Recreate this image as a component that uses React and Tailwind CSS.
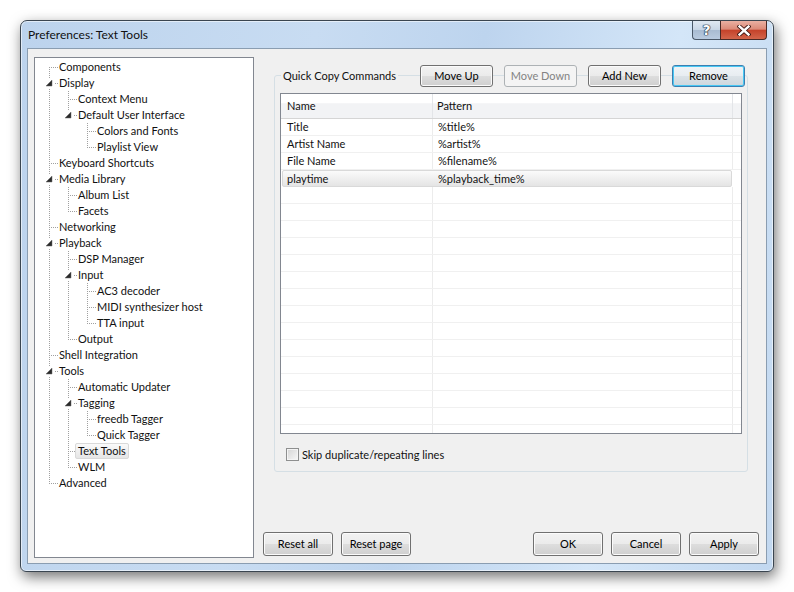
import React from 'react';

// Arborescence des pages de préférences
const tree = [
  { t: 'Components' },
  { t: 'Display', c: [
    { t: 'Context Menu' },
    { t: 'Default User Interface', c: [{ t: 'Colors and Fonts' }, { t: 'Playlist View' }] },
  ] },
  { t: 'Keyboard Shortcuts' },
  { t: 'Media Library', c: [{ t: 'Album List' }, { t: 'Facets' }] },
  { t: 'Networking' },
  { t: 'Playback', c: [
    { t: 'DSP Manager' },
    { t: 'Input', c: [{ t: 'AC3 decoder' }, { t: 'MIDI synthesizer host' }, { t: 'TTA input' }] },
    { t: 'Output' },
  ] },
  { t: 'Shell Integration' },
  { t: 'Tools', c: [
    { t: 'Automatic Updater' },
    { t: 'Tagging', c: [{ t: 'freedb Tagger' }, { t: 'Quick Tagger' }] },
    { t: 'Text Tools', sel: true },
    { t: 'WLM' },
  ] },
  { t: 'Advanced' },
];

const flatten = (nodes, depth = 0, cont = [], out = []) => {
  nodes.forEach((n, i) => {
    const last = i === nodes.length - 1;
    out.push({ ...n, depth, last, cont, first: depth === 0 && i === 0 });
    if (n.c) flatten(n.c, depth + 1, [...cont, !last], out);
  });
  return out;
};

const rows = flatten(tree);

const commands = [
  { name: 'Title', pattern: '%title%' },
  { name: 'Artist Name', pattern: '%artist%' },
  { name: 'File Name', pattern: '%filename%' },
  { name: 'playtime', pattern: '%playback_time%', sel: true },
];

const DOT = '#a0a0a0';

const Connector = ({ row }) => {
  const { depth, last, cont, first, c } = row;
  const w = 24 + 19 * depth;
  const x = 14 + 19 * depth + 0.5;
  return (
    <svg width={w} height="16" className="shrink-0" shapeRendering="crispEdges">
      {cont.map((on, k) =>
        on ? <line key={k} x1={14 + 19 * k + 0.5} y1="0" x2={14 + 19 * k + 0.5} y2="16" stroke={DOT} strokeDasharray="1 1" /> : null
      )}
      <line x1={x} y1={first ? 8 : 0} x2={x} y2={last ? 9 : 16} stroke={DOT} strokeDasharray="1 1" />
      <line x1={x + 1} y1="8.5" x2={x + 8} y2="8.5" stroke={DOT} strokeDasharray="1 1" />
      {c && (
        <>
          <rect x={10 + 19 * depth} y="3" width="10" height="10" fill="white" />
          <polygon
            points={`${17 + 19 * depth},5 ${17 + 19 * depth},11 ${11 + 19 * depth},11`}
            fill="#2b2b2b"
            stroke="#6b6b6b"
            strokeWidth="0.5"
            shapeRendering="auto"
          />
        </>
      )}
    </svg>
  );
};

const Button = ({ children, className = '', focused, disabled }) => {
  let look = 'border-[#707070] text-black bg-[linear-gradient(to_bottom,#f2f2f2_0%,#ebebeb_48%,#dddddd_52%,#cfcfcf_100%)] shadow-[inset_0_0_0_1px_#fbfbfb]';
  if (focused) look = 'border-[#3c7fb1] text-black bg-[linear-gradient(to_bottom,#f0f4f7_0%,#e8edf1_48%,#dbe2e7_52%,#ced7dd_100%)] shadow-[inset_0_0_0_1px_#48c8f4]';
  if (disabled) look = 'border-[#adb2b5] text-[#838383] bg-[#f4f4f4]';
  return (
    <div className={`flex items-center justify-center border rounded-[3px] ${look} ${className}`}>
      {children}
    </div>
  );
};

export default function App() {
  return (
    <div className="w-[794px] h-[592px] bg-white pt-[20px] pl-[20px] font-['Lato',sans-serif] text-[11px] text-[#111]">
      {/* fenêtre */}
      <div className="w-[754px] h-[552px] rounded-t-[7px] rounded-b-[6px] border border-[#3a4550] bg-[linear-gradient(100deg,#bcd3ed_0%,#c8dcf2_35%,#bdd4ee_55%,#d4e6f8_78%,#c2d8f0_100%)] shadow-[2px_5px_14px_rgba(0,0,0,0.55),inset_0_0_0_1px_rgba(255,255,255,0.55)] flex flex-col">
        {/* barre de titre */}
        <div className="h-[27px] flex items-start justify-between pl-[7px] pr-[6px]">
          <span className="leading-[27px] text-[12px]">Preferences: Text Tools</span>
          <div className="flex">
            <div className="w-[28px] h-[19px] border border-t-0 border-r-0 border-[#4a5868] rounded-bl-[4px] bg-[linear-gradient(to_bottom,#dfe8f2_0%,#c8d6e6_48%,#a9bcd2_52%,#b9cbe0_100%)] flex items-center justify-center">
              <span className="text-white font-black text-[14px] leading-none font-['DejaVu_Sans',sans-serif] [text-shadow:0_0_1px_#1b2a3d,0_0_1px_#1b2a3d,0_0_1px_#1b2a3d,0_0_1px_#1b2a3d]">?</span>
            </div>
            <div className="w-[47px] h-[19px] border border-t-0 border-[#4a2a26] rounded-br-[4px] bg-[linear-gradient(to_bottom,#eab0a2_0%,#dc8a78_45%,#c5432b_52%,#d3654b_100%)] flex items-center justify-center">
              <svg width="14" height="11" viewBox="0 0 14 11">
                <path d="M2.5 1.5 L11.5 9.5 M11.5 1.5 L2.5 9.5" stroke="#3b1410" strokeWidth="4.2" strokeLinecap="square" />
                <path d="M2.5 1.5 L11.5 9.5 M11.5 1.5 L2.5 9.5" stroke="#ffffff" strokeWidth="2.4" strokeLinecap="square" />
              </svg>
            </div>
          </div>
        </div>

        {/* zone cliente */}
        <div className="mx-[6px] h-[516px] border border-[#8a9db1] bg-[#f0f0f0] flex pl-[6px] pt-[8px]">
          {/* arbre */}
          <div className="w-[220px] h-[501px] border border-[#828790] bg-white pt-[1px] overflow-hidden">
            {rows.map((r) => (
              <div key={r.t} className="h-[16px] flex items-center whitespace-nowrap">
                <Connector row={r} />
                {r.sel ? (
                  <span className="-ml-[3px] h-[16px] px-[2px] flex items-center border border-[#d9d9d9] rounded-[2px] bg-[linear-gradient(to_bottom,#fafafa,#e5e5e5)]">
                    {r.t}
                  </span>
                ) : (
                  <span className="leading-[16px]">{r.t}</span>
                )}
              </div>
            ))}
          </div>

          {/* colonne droite */}
          <div className="ml-[9px] w-[496px] h-[501px] flex flex-col">
            <div className="mt-[18px] ml-[11px] w-[474px] h-[397px] border border-[#d5dfe5] rounded-[3px] flex flex-col">
              <div className="-mt-[11px] h-[22px] flex items-center pr-[2px]">
                <span className="ml-[6px] px-[2px] bg-[#f0f0f0] leading-[16px]">Quick Copy Commands</span>
                <div className="ml-auto flex gap-[11px]">
                  <Button className="w-[73px] h-[22px]">Move Up</Button>
                  <Button className="w-[73px] h-[22px]" disabled>Move Down</Button>
                  <Button className="w-[73px] h-[22px]">Add New</Button>
                  <Button className="w-[73px] h-[22px]" focused>Remove</Button>
                </div>
              </div>

              {/* liste */}
              <div className="ml-[5px] mt-[6px] w-[462px] h-[341px] border border-[#828790] bg-white overflow-hidden">
                <div className="h-[25px] flex border-b border-[#d5d5d5] bg-[linear-gradient(to_bottom,#ffffff_0%,#ffffff_38%,#f2f3f5_40%,#f2f3f5_100%)]">
                  <div className="w-[152px] pl-[6px] flex items-center border-r border-[#e3e5e8]">Name</div>
                  <div className="w-[300px] pl-[4px] flex items-center border-r border-[#e3e5e8]">Pattern</div>
                </div>
                {Array.from({ length: 19 }).map((_, i) => {
                  const cmd = commands[i];
                  if (cmd && cmd.sel) {
                    return (
                      <div key={i} className="h-[17px] flex">
                        <div className="ml-[1px] w-[450px] h-[17px] flex border border-[#d9d9d9] rounded-[2px] bg-[linear-gradient(to_bottom,#fbfbfb,#e4e4e4)]">
                          <div className="w-[150px] pl-[4px] pt-[1px] flex items-center">{cmd.name}</div>
                          <div className="pl-[5px] pt-[1px] flex items-center">{cmd.pattern}</div>
                        </div>
                      </div>
                    );
                  }
                  return (
                    <div key={i} className="h-[17px] flex border-b border-[#f0f0f0]">
                      <div className="w-[152px] pl-[6px] pt-[1px] flex items-center border-r border-[#ececec]">{cmd ? cmd.name : ''}</div>
                      <div className="w-[300px] pl-[5px] pt-[1px] flex items-center border-r border-[#ececec]">{cmd ? cmd.pattern : ''}</div>
                    </div>
                  );
                })}
              </div>

              <div className="mt-[14px] ml-[11px] flex items-center gap-[3px]">
                <div className="w-[13px] h-[13px] border border-[#8e8f8f] bg-[linear-gradient(135deg,#d4d4d4,#f7f7f7)] shadow-[inset_0_0_0_1px_#f4f4f4]" />
                <span className="leading-[13px]">Skip duplicate/repeating lines</span>
              </div>
            </div>

            <div className="flex-1" />

            <div className="mb-[2px] flex">
              <Button className="w-[70px] h-[24px]">Reset all</Button>
              <Button className="ml-[8px] w-[70px] h-[24px]">Reset page</Button>
              <div className="ml-auto flex gap-[8px]">
                <Button className="w-[70px] h-[24px]">OK</Button>
                <Button className="w-[70px] h-[24px]">Cancel</Button>
                <Button className="w-[70px] h-[24px]">Apply</Button>
              </div>
            </div>
          </div>
        </div>
      </div>
    </div>
  );
}
